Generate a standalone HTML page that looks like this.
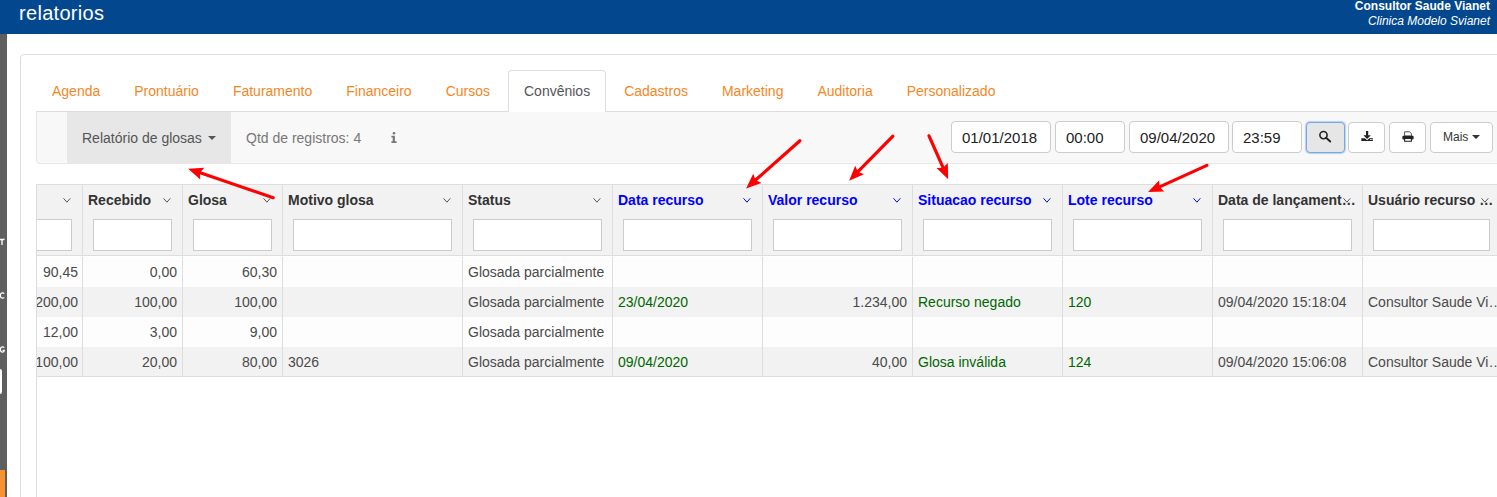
<!DOCTYPE html>
<html><head><meta charset="utf-8">
<style>
*{box-sizing:border-box;margin:0;padding:0}
html,body{width:1497px;height:497px;overflow:hidden;background:#fff;font-family:"Liberation Sans",sans-serif;position:relative}
.abs{position:absolute}
#hdr{left:0;top:0;width:1497px;height:34px;background:#03478e;color:#fff}
#hdr .t{left:19px;top:1px;font-size:20px;line-height:24px;white-space:nowrap;letter-spacing:.3px}
#hdr .u{right:7px;top:-1px;font-size:12px;line-height:14px;font-weight:bold;text-align:right;white-space:nowrap}
#hdr .c{right:7px;top:14px;font-size:12px;line-height:14px;font-style:italic;text-align:right;white-space:nowrap}
#side{left:0;top:34px;width:7px;height:463px;background:#5f5f5f}
#orange{left:0;top:470px;width:5px;height:27px;background:#f7922e}
#panel{left:20px;top:54px;width:1500px;height:500px;border:1px solid #ddd;border-radius:4px}
#tabs{left:36px;top:70px;width:1470px;height:42px;border-bottom:1px solid #ddd;display:flex}
#tabs div{height:41px;padding:10px 15px;border:1px solid transparent;margin-right:2px;font-size:14px;line-height:20px;color:#f5871f;white-space:nowrap}
#tabs div.act{border-color:#ddd;border-bottom-color:transparent;background:#fff;color:#555;border-radius:4px 4px 0 0;height:42px}
#bar{left:36px;top:112px;width:1470px;height:52px;background:#f8f8f8;border:1px solid #e7e7e7;border-top:none;border-radius:0 0 0 4px}

#dd{left:67px;top:112px;width:164px;height:51px;background:#e7e7e7}
.txt14{font-size:14px;line-height:20px;white-space:nowrap}
#ddt{left:82px;top:128px;color:#555}
.caret{display:inline-block;width:0;height:0;border-top:4px solid #555;border-left:4px solid transparent;border-right:4px solid transparent;vertical-align:middle;margin-left:6px;position:relative;top:-1px}
#qtd{left:246px;top:128px;color:#777}
#info{left:390px;top:131px}
.inp{height:32px;top:121px;border:1px solid #ccc;border-radius:4px;background:#fff;font-size:15px;line-height:32px;padding-left:10px;color:#222;white-space:nowrap}
.btn{height:31px;top:122px;border:1px solid #ccc;border-radius:4px;background:#fff}
#b1{left:1306px;width:39px;background:#e6e6e6;border-color:#7ba7e0;box-shadow:0 0 1px 1px rgba(102,160,233,.45)}

#tbl{left:36px;top:184px;width:1470px;height:320px;border-left:1px solid #ddd;overflow:hidden}
#thead{left:0;top:0;width:1470px;height:72px;background:#f2f2f2;border-top:1px solid #ddd;border-bottom:1px solid #ddd}
.hc{top:0;height:71px;border-left:1px solid #ddd}
.hc .ht{position:absolute;left:5px;right:17px;top:5px;font-size:14px;line-height:20px;font-weight:bold;color:#333;white-space:nowrap;overflow:hidden;text-overflow:ellipsis}
.hc .ht.b{color:#00f}
.hc .chev{position:absolute;right:11px;top:13px}
.hc .fi{position:absolute;left:10px;right:10px;top:34px;height:32px;background:#fff;border:1px solid #ccc}
.row{left:0;width:1470px;height:30px}
.row.o{background:#fdfdfd}
.row.e{background:#f2f2f2}
.bc{top:0;height:30px;border-left:1px solid #ddd;padding:0 5px;font-size:14px;line-height:31px;color:#4a4a4a;white-space:nowrap;overflow:hidden;text-overflow:ellipsis}
.bc.r{text-align:right}
.bc.g{color:#060}
#tbot{left:0;top:192px;width:1470px;height:1px;background:#ddd}
</style></head><body>
<div id="hdr" class="abs">
  <div class="abs t">relatorios</div>
  <div class="abs u">Consultor Saude Vianet</div>
  <div class="abs c">Clinica Modelo Svianet</div>
</div>
<div id="side" class="abs"></div>
<div id="orange" class="abs"></div>
<div id="panel" class="abs"></div>
<div id="tabs" class="abs">
  <div>Agenda</div><div>Prontuário</div><div>Faturamento</div><div>Financeiro</div><div>Cursos</div><div class="act">Convênios</div><div>Cadastros</div><div>Marketing</div><div>Auditoria</div><div>Personalizado</div>
</div>
<div id="bar" class="abs"></div>

<div id="dd" class="abs"></div>
<div id="ddt" class="abs txt14">Relatório de glosas<span class="caret"></span></div>
<div id="qtd" class="abs txt14">Qtd de registros: 4</div>
<svg id="info" class="abs" style="left:391px;top:132px" width="6" height="11" viewBox="0 0 6 11"><circle cx="3" cy="1.3" r="1.3" fill="#777"/><path d="M0.4 3.7h3.5v5.5h1.7v1.8H0.4V9.2h1.3V5.5H0.4z" fill="#777"/></svg>
<div class="abs inp" style="left:951px;width:100px">01/01/2018</div>
<div class="abs inp" style="left:1055px;width:70px">00:00</div>
<div class="abs inp" style="left:1129px;width:100px">09/04/2020</div>
<div class="abs inp" style="left:1232px;width:70px">23:59</div>
<div id="b1" class="abs btn"></div>
<div class="abs btn" style="left:1348px;width:37px"></div>
<div class="abs btn" style="left:1389px;width:37px"></div>
<div class="abs btn" style="left:1430px;width:63px"></div>
<div id="tbl" class="abs">
<div id="thead" class="abs">
<div class="abs hc" style="left:-64px;width:109px;border-left:none"><div class="ht">Pago</div><svg class="chev" width="8" height="5" viewBox="0 0 8 5"><path d="M0.5 0.3L3.9 4.2L7.3 0.3" fill="none" stroke="#555" stroke-width="1"/></svg><div class="fi"></div></div>
<div class="abs hc" style="left:45px;width:100px"><div class="ht">Recebido</div><svg class="chev" width="8" height="5" viewBox="0 0 8 5"><path d="M0.5 0.3L3.9 4.2L7.3 0.3" fill="none" stroke="#555" stroke-width="1"/></svg><div class="fi"></div></div>
<div class="abs hc" style="left:145px;width:100px"><div class="ht">Glosa</div><svg class="chev" width="8" height="5" viewBox="0 0 8 5"><path d="M0.5 0.3L3.9 4.2L7.3 0.3" fill="none" stroke="#555" stroke-width="1"/></svg><div class="fi"></div></div>
<div class="abs hc" style="left:245px;width:180px"><div class="ht">Motivo glosa</div><svg class="chev" width="8" height="5" viewBox="0 0 8 5"><path d="M0.5 0.3L3.9 4.2L7.3 0.3" fill="none" stroke="#555" stroke-width="1"/></svg><div class="fi"></div></div>
<div class="abs hc" style="left:425px;width:150px"><div class="ht">Status</div><svg class="chev" width="8" height="5" viewBox="0 0 8 5"><path d="M0.5 0.3L3.9 4.2L7.3 0.3" fill="none" stroke="#555" stroke-width="1"/></svg><div class="fi"></div></div>
<div class="abs hc" style="left:575px;width:150px"><div class="ht b">Data recurso</div><svg class="chev" width="8" height="5" viewBox="0 0 8 5"><path d="M0.5 0.3L3.9 4.2L7.3 0.3" fill="none" stroke="#00f" stroke-width="1"/></svg><div class="fi"></div></div>
<div class="abs hc" style="left:725px;width:150px"><div class="ht b">Valor recurso</div><svg class="chev" width="8" height="5" viewBox="0 0 8 5"><path d="M0.5 0.3L3.9 4.2L7.3 0.3" fill="none" stroke="#00f" stroke-width="1"/></svg><div class="fi"></div></div>
<div class="abs hc" style="left:875px;width:150px"><div class="ht b">Situacao recurso</div><svg class="chev" width="8" height="5" viewBox="0 0 8 5"><path d="M0.5 0.3L3.9 4.2L7.3 0.3" fill="none" stroke="#00f" stroke-width="1"/></svg><div class="fi"></div></div>
<div class="abs hc" style="left:1025px;width:150px"><div class="ht b">Lote recurso</div><svg class="chev" width="8" height="5" viewBox="0 0 8 5"><path d="M0.5 0.3L3.9 4.2L7.3 0.3" fill="none" stroke="#00f" stroke-width="1"/></svg><div class="fi"></div></div>
<div class="abs hc" style="left:1175px;width:150px"><div class="ht" style="right:auto;overflow:visible">Data de lançament…</div><svg class="chev" width="8" height="5" viewBox="0 0 8 5"><path d="M0.5 0.3L3.9 4.2L7.3 0.3" fill="none" stroke="#555" stroke-width="1"/></svg><div class="fi"></div></div>
<div class="abs hc" style="left:1325px;width:138px"><div class="ht" style="right:5px">Usuário recurso glosa</div><svg class="chev" width="8" height="5" viewBox="0 0 8 5"><path d="M0.5 0.3L3.9 4.2L7.3 0.3" fill="none" stroke="#555" stroke-width="1"/></svg><div class="fi"></div></div>
</div>
<div class="abs row o" style="top:73px">
<div class="abs bc r" style="left:-64px;width:110px;border-left:none">90,45</div>
<div class="abs bc r" style="left:45px;width:100px">0,00</div>
<div class="abs bc r" style="left:145px;width:100px">60,30</div>
<div class="abs bc " style="left:245px;width:180px"></div>
<div class="abs bc " style="left:425px;width:150px">Glosada parcialmente</div>
<div class="abs bc g" style="left:575px;width:150px"></div>
<div class="abs bc r" style="left:725px;width:150px"></div>
<div class="abs bc g" style="left:875px;width:150px"></div>
<div class="abs bc g" style="left:1025px;width:150px"></div>
<div class="abs bc " style="left:1175px;width:150px"></div>
<div class="abs bc " style="left:1325px;width:150px"></div>
</div>
<div class="abs row e" style="top:103px">
<div class="abs bc r" style="left:-64px;width:110px;border-left:none">200,00</div>
<div class="abs bc r" style="left:45px;width:100px">100,00</div>
<div class="abs bc r" style="left:145px;width:100px">100,00</div>
<div class="abs bc " style="left:245px;width:180px"></div>
<div class="abs bc " style="left:425px;width:150px">Glosada parcialmente</div>
<div class="abs bc g" style="left:575px;width:150px">23/04/2020</div>
<div class="abs bc r" style="left:725px;width:150px">1.234,00</div>
<div class="abs bc g" style="left:875px;width:150px">Recurso negado</div>
<div class="abs bc g" style="left:1025px;width:150px">120</div>
<div class="abs bc " style="left:1175px;width:150px">09/04/2020 15:18:04</div>
<div class="abs bc " style="left:1325px;width:150px">Consultor Saude Vianet</div>
</div>
<div class="abs row o" style="top:133px">
<div class="abs bc r" style="left:-64px;width:110px;border-left:none">12,00</div>
<div class="abs bc r" style="left:45px;width:100px">3,00</div>
<div class="abs bc r" style="left:145px;width:100px">9,00</div>
<div class="abs bc " style="left:245px;width:180px"></div>
<div class="abs bc " style="left:425px;width:150px">Glosada parcialmente</div>
<div class="abs bc g" style="left:575px;width:150px"></div>
<div class="abs bc r" style="left:725px;width:150px"></div>
<div class="abs bc g" style="left:875px;width:150px"></div>
<div class="abs bc g" style="left:1025px;width:150px"></div>
<div class="abs bc " style="left:1175px;width:150px"></div>
<div class="abs bc " style="left:1325px;width:150px"></div>
</div>
<div class="abs row e" style="top:163px">
<div class="abs bc r" style="left:-64px;width:110px;border-left:none">100,00</div>
<div class="abs bc r" style="left:45px;width:100px">20,00</div>
<div class="abs bc r" style="left:145px;width:100px">80,00</div>
<div class="abs bc " style="left:245px;width:180px">3026</div>
<div class="abs bc " style="left:425px;width:150px">Glosada parcialmente</div>
<div class="abs bc g" style="left:575px;width:150px">09/04/2020</div>
<div class="abs bc r" style="left:725px;width:150px">40,00</div>
<div class="abs bc g" style="left:875px;width:150px">Glosa inválida</div>
<div class="abs bc g" style="left:1025px;width:150px">124</div>
<div class="abs bc " style="left:1175px;width:150px">09/04/2020 15:06:08</div>
<div class="abs bc " style="left:1325px;width:150px">Consultor Saude Vianet</div>
</div>
<div id="tbot" class="abs"></div>
</div>

<svg class="abs" style="left:1318px;top:129px" width="15" height="14" viewBox="0 0 15 14"><circle cx="5.5" cy="6.1" r="3.6" fill="none" stroke="#222" stroke-width="1.6"/><path d="M8.2 8.8L12.2 12.5" stroke="#222" stroke-width="1.9" stroke-linecap="round"/></svg>
<svg class="abs" style="left:1360px;top:130px" width="14" height="12" viewBox="0 0 14 12"><path d="M6 1h2.2v4.3h2.6L7.1 9 3.4 5.3H6z" fill="#222"/><path d="M1.3 8.2h3.6l2.2 2.1 2.2-2.1h3.6v2.8H1.3z" fill="#222"/><rect x="10.2" y="9" width="1" height="1" fill="#fff"/><rect x="11.5" y="9" width="1" height="1" fill="#fff"/></svg>
<svg class="abs" style="left:1401px;top:130px" width="14" height="13" viewBox="0 0 14 13"><path d="M3.6 1.8h5l1.8 1.8v2.5H3.6z" fill="none" stroke="#555" stroke-width="1"/><rect x="1.4" y="5.8" width="11.2" height="3.6" rx="1" fill="#222"/><path d="M3.6 8.5h6.8v2.8H3.6z" fill="#fff" stroke="#222" stroke-width="1.1"/></svg>
<div class="abs" style="left:1443px;top:129px;font-size:12px;line-height:16px;color:#333;white-space:nowrap">Mais<span style="display:inline-block;width:0;height:0;border-top:4px solid #333;border-left:4px solid transparent;border-right:4px solid transparent;vertical-align:middle;margin-left:4px;position:relative;top:-1px"></span></div>
<div class="abs" style="left:0;top:238px;width:4px;height:6px;font-size:0"><svg width="5" height="7"><path d="M0 1.5h2v5.5M2 2.5q1-1.5 2.5-1.2" stroke="#fff" stroke-width="1.3" fill="none"/></svg></div>
<svg class="abs" style="left:0;top:292px" width="5" height="7"><path d="M4.3 1.6Q3.5 .8 2.3 .9 .4 1.1 .4 3.5 .4 5.9 2.3 6.1 3.5 6.2 4.3 5.4" stroke="#fff" stroke-width="1.2" fill="none"/></svg>
<svg class="abs" style="left:0;top:346px" width="5" height="8"><path d="M4.3 1.6Q3.5 .8 2.3 .9 .4 1.1 .4 3.5 .4 5.9 2.3 6.1 4.1 6.2 4.3 4.4H2.6" stroke="#fff" stroke-width="1.2" fill="none"/></svg>
<div class="abs" style="left:-4px;top:369px;width:6px;height:25px;background:#fff;border-radius:2px"></div>
<svg class="abs" style="left:0;top:0" width="1497" height="497"><line x1="273.2" y1="197.7" x2="199.5" y2="172.6" stroke="#f00" stroke-width="3.2" stroke-linecap="round"/><polygon points="188.1,168.7 204.3,167.7 199.9,172.7 200.3,179.4" fill="#f00"/><line x1="799.9" y1="140.8" x2="755.1" y2="180.4" stroke="#f00" stroke-width="3.2" stroke-linecap="round"/><polygon points="746.1,188.4 753.2,173.8 755.5,180.1 761.4,183.1" fill="#f00"/><line x1="892.9" y1="136.1" x2="857.5" y2="172.1" stroke="#f00" stroke-width="3.2" stroke-linecap="round"/><polygon points="849.1,180.7 855.2,165.7 857.9,171.8 864.0,174.3" fill="#f00"/><line x1="929.0" y1="135.8" x2="943.3" y2="168.2" stroke="#f00" stroke-width="3.2" stroke-linecap="round"/><polygon points="948.2,179.2 936.5,168.0 943.1,167.8 947.8,163.0" fill="#f00"/><line x1="1206.9" y1="165.4" x2="1159.0" y2="187.1" stroke="#f00" stroke-width="3.2" stroke-linecap="round"/><polygon points="1148.1,192.1 1159.2,180.3 1159.5,186.9 1164.3,191.5" fill="#f00"/></svg>
</body></html>
